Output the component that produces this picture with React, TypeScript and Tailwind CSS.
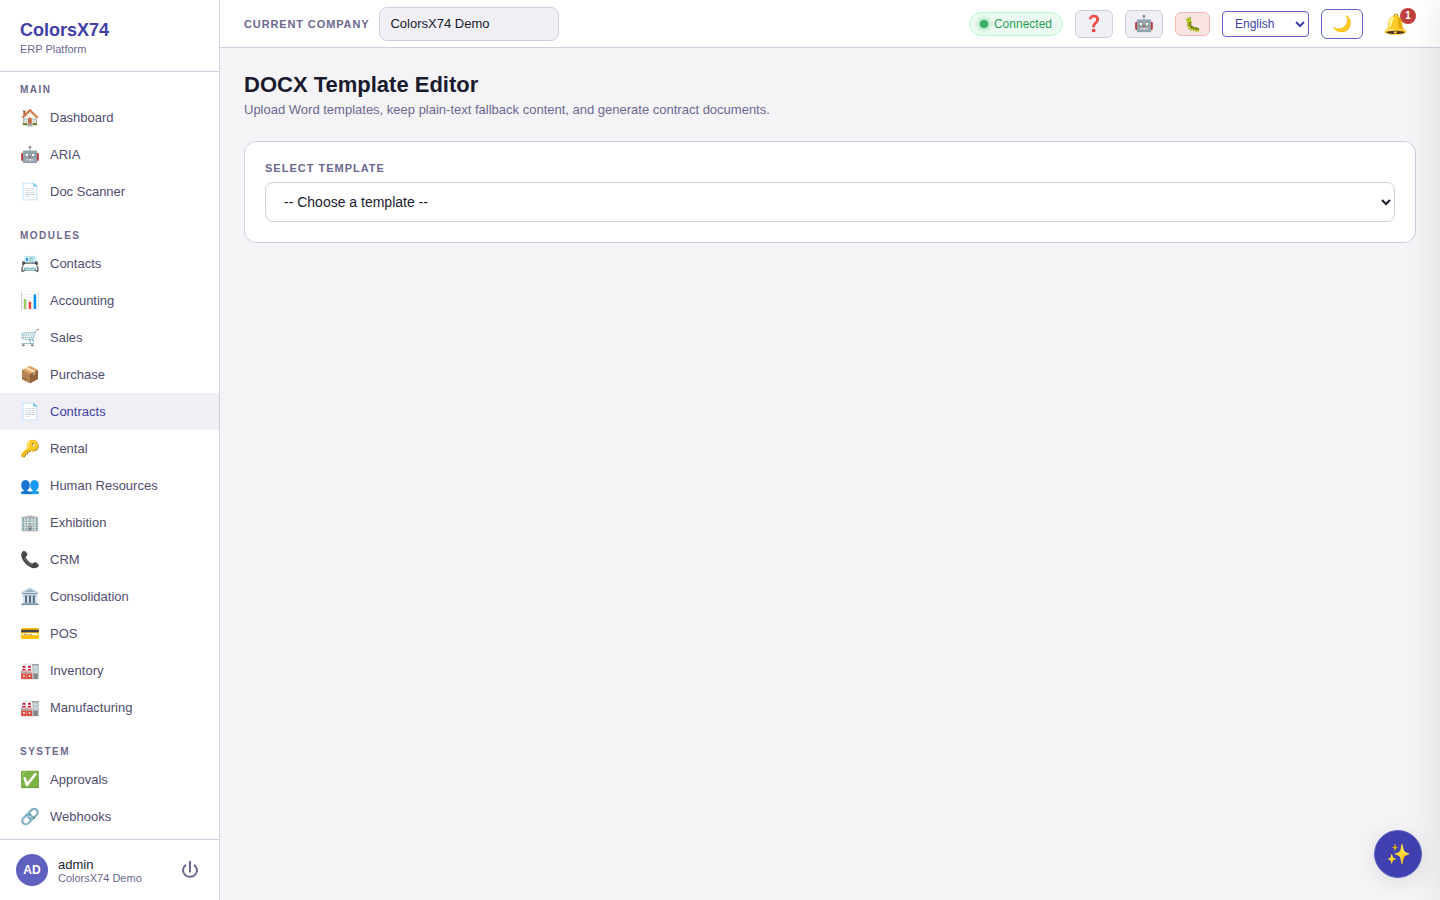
import React from 'react';

interface NavItem {
  icon: string;
  label: string;
}

interface NavSection {
  title: string;
  items: NavItem[];
}

const NAV_SECTIONS: NavSection[] = [
  {
    title: 'MAIN',
    items: [
      { icon: '🏠', label: 'Dashboard' },
      { icon: '🤖', label: 'ARIA' },
      { icon: '📄', label: 'Doc Scanner' },
    ],
  },
  {
    title: 'MODULES',
    items: [
      { icon: '📇', label: 'Contacts' },
      { icon: '📊', label: 'Accounting' },
      { icon: '🛒', label: 'Sales' },
      { icon: '📦', label: 'Purchase' },
      { icon: '📄', label: 'Contracts' },
      { icon: '🔑', label: 'Rental' },
      { icon: '👥', label: 'Human Resources' },
      { icon: '🏢', label: 'Exhibition' },
      { icon: '📞', label: 'CRM' },
      { icon: '🏛️', label: 'Consolidation' },
      { icon: '💳', label: 'POS' },
      { icon: '🏭', label: 'Inventory' },
      { icon: '🏭', label: 'Manufacturing' },
    ],
  },
  {
    title: 'SYSTEM',
    items: [
      { icon: '✅', label: 'Approvals' },
      { icon: '🔗', label: 'Webhooks' },
    ],
  },
];

const Sidebar: React.FC<{ active: string }> = ({ active }) => (
  <aside className="sticky top-0 flex h-screen w-[220px] shrink-0 flex-col border-r border-[#d0cfe0] bg-white">
    <div className="border-b border-[#d0cfe0] px-5 pt-[18px] pb-[15px]">
      <div className="text-lg leading-6 font-bold text-[#4040a8]">ColorsX74</div>
      <div className="text-[11px] leading-[14px] text-[#6b6890]">ERP Platform</div>
    </div>

    <nav className="min-h-0 flex-1 overflow-hidden">
      {NAV_SECTIONS.map((section) => (
        <div key={section.title} className="mb-2">
          <h2 className="px-5 pt-3 pb-[3px] text-[10px] leading-3 font-bold tracking-[1.5px] text-[#6b6890]">
            {section.title}
          </h2>
          {section.items.map((item) => (
            <a
              key={item.label}
              href="#"
              className={
                item.label === active
                  ? 'flex h-[37px] items-center gap-2.5 bg-[#f0eff5] px-5 text-[13px] text-[#4040a8]'
                  : 'flex h-[37px] items-center gap-2.5 px-5 text-[13px] text-[#504d70]'
              }
            >
              <span className="w-5 text-center text-base leading-5">{item.icon}</span>
              {item.label}
            </a>
          ))}
        </div>
      ))}
    </nav>

    <div className="flex items-center gap-2.5 border-t border-[#d0cfe0] px-4 py-3.5">
      <div className="flex size-8 items-center justify-center rounded-full bg-[#6060c0] text-xs font-bold text-white">
        AD
      </div>
      <div className="min-w-0 flex-1">
        <div className="text-[13px] leading-[15px] text-[#1a1a2e]">admin</div>
        <div className="text-[11px] leading-3 text-[#6b6890]">ColorsX74 Demo</div>
      </div>
      <button type="button" aria-label="Log out" className="px-1 text-[#6b6890]">
        <svg className="size-[18px]" viewBox="0 0 18 18" fill="none" stroke="currentColor" strokeWidth={2}>
          <path d="M9 0v11.5" />
          <path d="M5 3.8a7 6.6 0 1 0 8 0" />
        </svg>
      </button>
    </div>
  </aside>
);

const TopBar: React.FC = () => (
  <header className="flex h-12 items-center justify-between border-b border-[#d0cfe0] bg-white px-6">
    <div className="flex items-center gap-2.5">
      <label
        htmlFor="company"
        className="pt-px text-[11px] leading-4 font-bold tracking-[0.08em] text-[#6b6890]"
      >
        CURRENT COMPANY
      </label>
      <input
        id="company"
        readOnly
        value="ColorsX74 Demo"
        className="h-[34px] w-[180px] rounded-lg border border-[#d0cfe0] bg-[#f0eff5] px-2.5 text-[13px] text-[#1a1a2e]"
      />
    </div>

    <div className="flex items-center gap-3">
      <div className="flex h-6 items-center gap-1.5 rounded-full border border-[#bbf7d0] bg-[#edfcf3] px-2.5 text-xs text-[#2a9d55]">
        <span className="size-2 rounded-full bg-[#3dac68] shadow-[0_0_6px_#3dac68]" />
        Connected
      </div>
      <button
        type="button"
        aria-label="Help"
        className="flex h-7 w-[38px] items-center justify-center rounded-md border border-[#d0cfe0] bg-[#f0eff5] text-base"
      >
        ❓
      </button>
      <button
        type="button"
        aria-label="Assistant"
        className="flex h-7 w-[38px] items-center justify-center rounded-md border border-[#d0cfe0] bg-[#f0eff5] text-base"
      >
        🤖
      </button>
      <button
        type="button"
        aria-label="Report a bug"
        className="flex h-6 w-[35px] items-center justify-center rounded-md border border-[#f5b5b5] bg-[#f9e3e3] text-sm"
      >
        🐛
      </button>
      <select
        aria-label="Language"
        className="h-[26px] w-[87px] rounded border border-[#6060c0] bg-white px-2 text-xs text-[#4040a8]"
      >
        <option>English</option>
      </select>
      <button
        type="button"
        aria-label="Toggle dark mode"
        className="flex h-[30px] w-[42px] items-center justify-center rounded-md border border-[#6060c0] bg-white text-base"
      >
        🌙
      </button>
      <button
        type="button"
        aria-label="Notifications"
        className="relative flex h-8 w-[41px] items-center justify-center text-xl"
      >
        🔔
        <span className="absolute top-0 right-0 flex size-4 items-center justify-center rounded-full bg-[#c04040] text-[10px] leading-3 font-bold text-white">
          1
        </span>
      </button>
    </div>
  </header>
);

const TemplateEditor: React.FC = () => (
  <main className="px-6 pt-6">
    <h1 className="text-[22px] leading-[26px] font-bold text-[#1a1a2e]">DOCX Template Editor</h1>
    <p className="mt-1 text-[13px] leading-4 text-[#6b6890]">
      Upload Word templates, keep plain-text fallback content, and generate contract documents.
    </p>

    <section className="mt-[23px] rounded-xl border border-[#d0cfe0] bg-white p-5">
      <label
        htmlFor="template"
        className="block text-[11px] leading-3 font-bold tracking-[1px] text-[#6b6890]"
      >
        SELECT TEMPLATE
      </label>
      <select
        id="template"
        className="mt-2 block h-10 w-full rounded-lg border border-[#d0cfe0] bg-white px-3.5 text-sm text-[#1a1a2e]"
      >
        <option>-- Choose a template --</option>
      </select>
    </section>
  </main>
);

export default function App() {
  return (
    <div className="flex min-h-screen bg-[#f4f4f7] font-['Liberation_Sans',Arial,sans-serif] text-[#1a1a2e]">
      <Sidebar active="Contracts" />
      <div className="min-w-0 flex-1">
        <TopBar />
        <TemplateEditor />
      </div>

      <button
        type="button"
        aria-label="Open assistant"
        className="fixed right-[18px] bottom-[22px] flex size-12 items-center justify-center rounded-full border border-[#6060c0] bg-[#4040b0] text-xl shadow-[0_4px_20px_rgba(0,0,0,0.1)]"
      >
        ✨
      </button>

      {/* Closed drawer: only its shadow reaches into the window */}
      <div className="pointer-events-none fixed inset-y-0 right-0 w-80 translate-x-full bg-white shadow-[-4px_0_32px_rgba(0,0,0,0.08)]" />
    </div>
  );
}
